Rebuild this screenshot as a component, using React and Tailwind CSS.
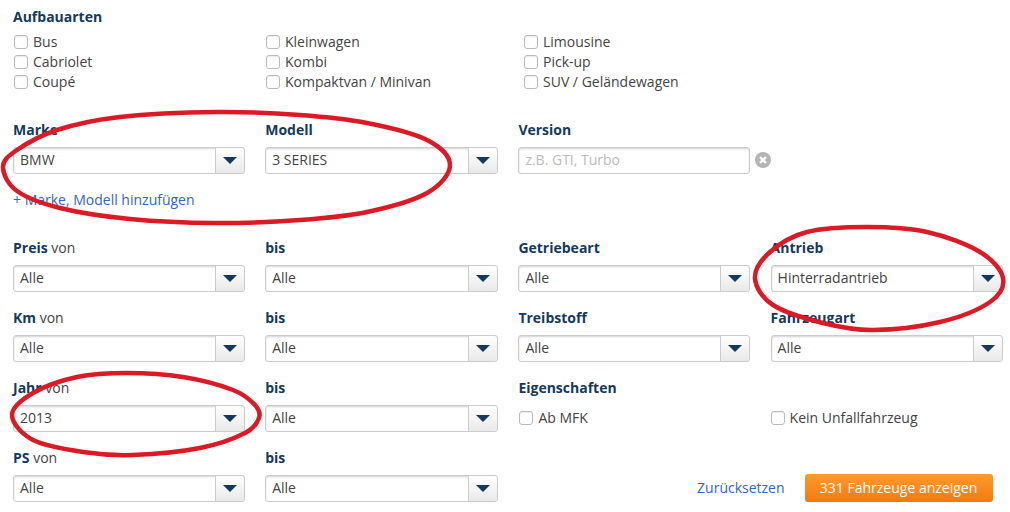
const Label = ({ children, suffix }) => (
  <div className="h-5 leading-5 text-sm font-bold text-[#133a5e] whitespace-nowrap">
    {children}
    {suffix && <span className="font-normal text-[#444]"> {suffix}</span>}
  </div>
);

const Select = ({ value }) => (
  <div className="mt-[7px] h-[27px] flex rounded-[3px] border border-[#ccc] shadow-[inset_0_1px_2px_rgba(0,0,0,0.18)] bg-white">
    <div className="flex-1 pl-[6px] leading-[23px] text-sm text-[#444]">{value}</div>
    <div className="w-[29px] flex items-center justify-center border-l border-[#ccc] rounded-r-[3px] bg-gradient-to-b from-white to-[#e9e9e9]">
      <div className="w-0 h-0 border-x-[7px] border-x-transparent border-t-[7px] border-t-[#133a5e]" />
    </div>
  </div>
);

const Field = ({ label, suffix, value }) => (
  <div>
    <Label suffix={suffix}>{label}</Label>
    <Select value={value} />
  </div>
);

const Check = ({ label }) => (
  <label className="h-5 flex items-center text-sm text-[#444] whitespace-nowrap">
    <span className="w-[14px] h-[14px] mr-[5px] rounded-[3px] border border-[#bbb] bg-white shadow-[inset_0_1px_1px_rgba(0,0,0,0.08)]" />
    {label}
  </label>
);

const bodyTypes = [
  ['Bus', 'Cabriolet', 'Coupé'],
  ['Kleinwagen', 'Kombi', 'Kompaktvan / Minivan'],
  ['Limousine', 'Pick-up', 'SUV / Geländewagen'],
];

const gridClass = 'grid grid-cols-[232px_233px_232px_232px] gap-x-[20.2px]';

// hand drawn marker rings, closed smooth curve through the points
const ring = (pts) => {
  const n = pts.length;
  let d = `M${pts[0][0]} ${pts[0][1]}`;
  for (let i = 0; i < n; i++) {
    const [p0, p1, p2, p3] = [pts[(i + n - 1) % n], pts[i], pts[(i + 1) % n], pts[(i + 2) % n]];
    const c1 = [p1[0] + (p2[0] - p0[0]) / 6, p1[1] + (p2[1] - p0[1]) / 6];
    const c2 = [p2[0] - (p3[0] - p1[0]) / 6, p2[1] - (p3[1] - p1[1]) / 6];
    d += `C${c1[0]} ${c1[1]} ${c2[0]} ${c2[1]} ${p2[0]} ${p2[1]}`;
  }
  return d + 'Z';
};

const rings = [
  [[217, 112], [300, 115], [367, 123], [427, 140], [450, 165], [427, 193], [367, 212], [300, 220], [215, 223], [130, 219], [60, 208], [17, 191], [3, 167], [17, 150], [57, 130], [120, 117]],
  [[867, 227], [927, 232], [980, 252], [1003, 278], [990, 302], [940, 322], [873, 330], [823, 323], [773, 305], [755, 278], [770, 252], [807, 232]],
  [[127, 373], [183, 377], [233, 390], [255, 405], [259, 418], [245, 433], [200, 448], [133, 455], [83, 452], [33, 440], [12, 415], [33, 393], [77, 377]],
];

export default function App() {
  return (
    <div className="relative w-[1010px] h-[512px] overflow-hidden bg-white pt-[7px] pl-[13px] font-['Open_Sans',sans-serif]">
      <Label>Aufbauarten</Label>
      <div className="mt-[5px] grid grid-cols-[252px_258px_1fr]">
        {bodyTypes.map((col, i) => (
          <div key={i} className="pl-px">
            {col.map((t) => <Check key={t} label={t} />)}
          </div>
        ))}
      </div>

      <div className={`${gridClass} mt-7`}>
        <Field label="Marke" value="BMW" />
        <Field label="Modell" value="3 SERIES" />
        <div>
          <Label>Version</Label>
          <div className="mt-[7px] h-[27px] rounded-[3px] border border-[#ccc] shadow-[inset_0_1px_2px_rgba(0,0,0,0.18)] pl-[6px] leading-[23px] text-sm text-[#bbb]">
            z.B. GTI, Turbo
          </div>
        </div>
        <div className="pt-[27px] -ml-4">
          <svg width="16" height="27" viewBox="0 0 16 27">
            <circle cx="8" cy="13" r="8" fill="#b5b5b5" />
            <path d="M5 10l6 6M11 10l-6 6" stroke="#fff" strokeWidth="2.4" />
          </svg>
        </div>
      </div>

      <div className="mt-4 h-5 leading-5 text-sm text-[#2f66c8]">+ Marke, Modell hinzufügen</div>

      <div className={`${gridClass} mt-7 gap-y-4`}>
        <Field label="Preis" suffix="von" value="Alle" />
        <Field label="bis" value="Alle" />
        <Field label="Getriebeart" value="Alle" />
        <Field label="Antrieb" value="Hinterradantrieb" />

        <Field label="Km" suffix="von" value="Alle" />
        <Field label="bis" value="Alle" />
        <Field label="Treibstoff" value="Alle" />
        <Field label="Fahrzeugart" value="Alle" />

        <Field label="Jahr" suffix="von" value="2013" />
        <Field label="bis" value="Alle" />
        <div>
          <Label>Eigenschaften</Label>
          <div className="mt-[10px] pl-px"><Check label="Ab MFK" /></div>
        </div>
        <div className="pt-[30px]"><Check label="Kein Unfallfahrzeug" /></div>

        <Field label="PS" suffix="von" value="Alle" />
        <Field label="bis" value="Alle" />
        <div className="col-span-2 pt-[25px] pr-[10px] flex items-center justify-end">
          <span className="text-sm text-[#2f66c8] mr-5">Zurücksetzen</span>
          <button className="w-[188px] h-7 rounded-[3px] text-sm text-white bg-gradient-to-b from-[#ff9a2e] to-[#f27a0c]">
            331 Fahrzeuge anzeigen
          </button>
        </div>
      </div>

      <svg className="absolute inset-0 pointer-events-none" width="1010" height="512" viewBox="0 0 1010 512" fill="none" stroke="#db1a26" strokeWidth="4.5">
        {rings.map((pts, i) => <path key={i} d={ring(pts)} />)}
      </svg>
    </div>
  );
}
